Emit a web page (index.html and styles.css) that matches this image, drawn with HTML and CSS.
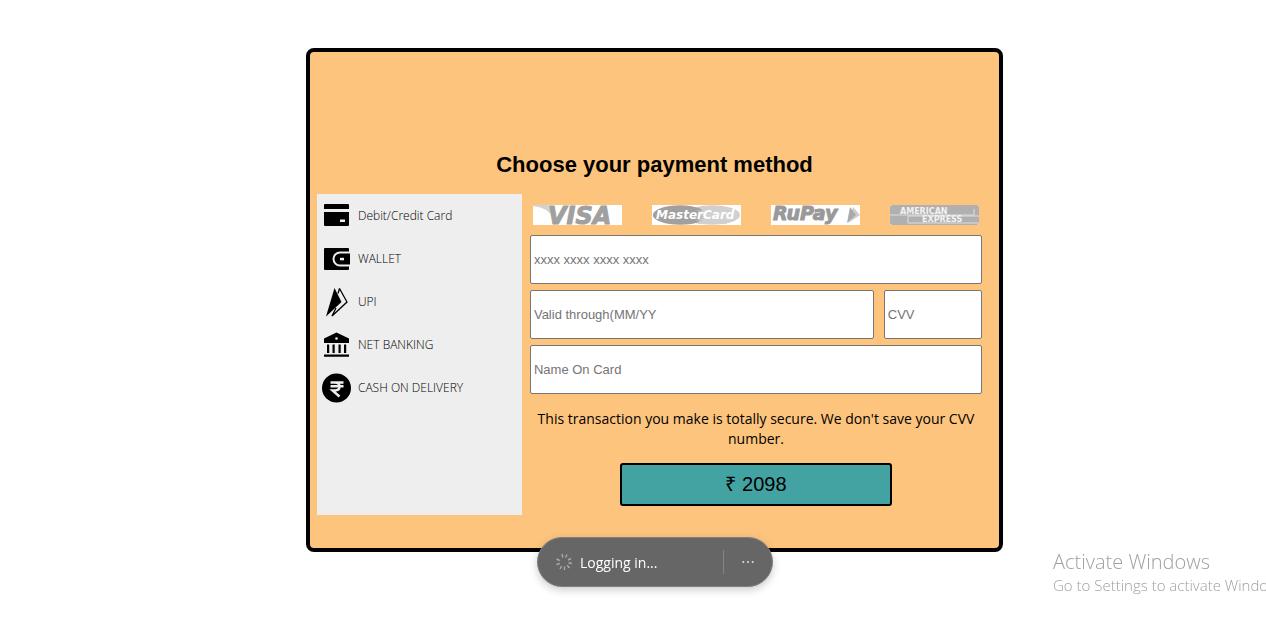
FILE: index.html
```html
<!DOCTYPE html>
<html lang="en">
<head>
<meta charset="utf-8">
<title>Payment</title>
<link rel="stylesheet" href="styles.css">
</head>
<body>
<main class="page">
  <section class="card">
    <h1 class="title">Choose your payment method</h1>
    <div class="columns">
      <nav class="methods" aria-label="Payment methods">
        <a class="method" href="#card">
          <svg class="icon" viewBox="0 0 30 30" aria-hidden="true"><path d="M3 3h23q1 0 1 1v4H2V4q0-1 1-1zM2 11h25v13q0 1-1 1H3q-1 0-1-1z"/><path fill="#eee" d="M18 18.500h5v2.500h-5z"/></svg>
          Debit/Credit Card</a>
        <a class="method" href="#wallet">
          <svg class="icon" viewBox="0 0 30 30" aria-hidden="true"><path d="M3 4h23q1 0 1 1v2.500H18a7.500 7.500 0 0 0 0 15h9V25q0 1-1 1H3q-1 0-1-1V5q0-1 1-1z"/><path d="M18 9.500h10v11H18a5.500 5.500 0 0 1 0-11z"/><path fill="#eee" d="M18 13.800h4v2.500h-4z"/></svg>
          WALLET</a>
        <a class="method" href="#upi">
          <svg class="icon" viewBox="0 0 30 30" aria-hidden="true"><path d="M12.500 1l7 14L4 29.500z"/><path d="M17.500 1.500L25 15 10 29l4-8M17.500 1.500l-1.500 5" fill="none" stroke="#000" stroke-width="1.300"/></svg>
          UPI</a>
        <a class="method" href="#netbanking">
          <svg class="icon" viewBox="0 0 30 30" aria-hidden="true"><path d="M14.500 2.500L27 8.500V13H2V8.500zM5 14.500h2.200V23H5zm5.500 0h2.200V23h-2.200zm6 0h2.200V23h-2.200zm5.500 0h2.200V23H22zM2 24.500h25v2.200H2z"/><circle cx="14.500" cy="8.500" r="1.300" fill="#eee"/></svg>
          NET BANKING</a>
        <a class="method" href="#cash">
          <svg class="icon" viewBox="0 0 30 30" aria-hidden="true"><circle cx="14.500" cy="15" r="14.500"/><path d="M8.500 9.500h13M8.500 13.300h13M9.500 9.500h3.500q4.500 0 4.500 4t-4.500 4h-2.500l7 6" fill="none" stroke="#eee" stroke-width="2.400"/></svg>
          CASH ON DELIVERY</a>
      </nav>
      <form class="form">
        <div class="brands">
          <svg class="brand" viewBox="0 0 89 20" role="img" aria-label="Visa">
            <rect width="89" height="20" fill="#fff"/>
            <path d="M0 0h14q3 0 3.500 2l3 11Q14 2 0 1z" fill="#d2d2d2"/>
            <text class="brand-visa" x="15" y="19">VISA</text>
          </svg>
          <svg class="brand" viewBox="0 0 89 20" role="img" aria-label="MasterCard">
            <rect width="89" height="20" fill="#fff"/>
            <ellipse cx="60" cy="10" rx="28" ry="9.800" fill="#d0d0d0"/>
            <path d="M48 3.500A27 9.800 0 1 0 48 16.500l-5-1h7l-7-2h9l-8-2h8l-8-2h8l-8-2h8l-8-2h7z" fill="#a0a0a0"/>
            <text class="brand-master" x="4" y="14">MasterCard</text>
          </svg>
          <svg class="brand" viewBox="0 0 89 20" role="img" aria-label="RuPay">
            <rect width="89" height="20" fill="#fff"/>
            <path d="M82 2l7 8-12 8z" fill="#ccc"/>
            <path d="M79 2l6 8-9 8z" fill="#aaa"/>
            <text class="brand-rupay" x="2" y="15">RuPay</text>
          </svg>
          <svg class="brand" viewBox="0 0 89 20" role="img" aria-label="American Express">
            <rect width="89" height="20" fill="#ddd"/>
            <rect width="89" height="20" rx="3" fill="#b0b0b0"/>
            <path d="M0 10h84V4M89 18H18v-7h71" fill="none" stroke="#dedede" stroke-width="1"/>
            <text class="brand-amex" x="10" y="9">AMERICAN</text>
            <text class="brand-amex" x="32" y="17">EXPRESS</text>
          </svg>
        </div>
        <div class="fields">
          <input class="field" type="text" placeholder="xxxx xxxx xxxx xxxx" aria-label="Card number">
          <div class="pair">
            <input class="field" type="text" placeholder="Valid through(MM/YY" aria-label="Valid through">
            <input class="field" type="text" placeholder="CVV" aria-label="CVV">
          </div>
          <input class="field" type="text" placeholder="Name On Card" aria-label="Name on card">
        </div>
        <p class="note">This transaction you make is totally secure. We don't save your CVV number.</p>
        <button class="pay" type="button">₹ 2098</button>
      </form>
    </div>
  </section>
</main>
<div class="toast" role="status">
  <svg class="spinner" viewBox="0 0 18 18" aria-hidden="true"><g stroke="#aaa" stroke-width="1.400"><path d="M7 1l.8 3.500M12 1.500l-1.500 3M16 5.500l-3 1.500M17 10.500l-3.500-.8M14.500 15l-2.300-2.700M9.500 17v-3.500M5 16l1.500-3M1.500 11.500l3.300-1M1.500 6l3.200 1.500"/></g></svg>
  <span class="toast-text">Logging in...</span>
  <button class="more" type="button" aria-label="More">
    <svg class="dots" viewBox="0 0 12 4"><circle cx="1.300" cy="2" r="1"/><circle cx="6" cy="2" r="1"/><circle cx="10.700" cy="2" r="1"/></svg>
  </button>
</div>
<aside class="watermark">
  <div class="watermark-title">Activate Windows</div>
  <div class="watermark-text">Go to Settings to activate Windows.</div>
</aside>
</body>
</html>
```
FILE: styles.css
```css
* { box-sizing: border-box; }
body { margin: 0; background: #fff; color: #000; font-family: "Open Sans", "Noto Sans", sans-serif; }
.page { padding: 48px 0 48px 43px; }
.card {
  width: 57%;
  min-width: 600px;
  margin: 0 auto;
  padding: 100px 17px 33px 7px;
  border: 4px solid #000;
  border-radius: 8px;
  background: #fdc47d;
}
.title {
  margin: 0 0 16px 10px;
  font: bold 22px/26px "Liberation Sans", Arial, sans-serif;
  text-align: center;
}
.columns { display: grid; grid-template-columns: 205px 1fr; gap: 8px; }
.methods { display: flex; flex-direction: column; background: #eee; }
.method {
  display: flex;
  align-items: center;
  gap: 6px;
  height: 43px;
  padding-left: 5px;
  color: #000;
  font-size: 12px;
  font-weight: 300;
  text-decoration: none;
}
.icon { width: 30px; height: 30px; }
.form { display: flex; flex-direction: column; padding: 11px 0 9px; }
.brands { display: flex; justify-content: space-between; margin: 0 3px 10px; }
.brand { width: 89px; height: 20px; overflow: visible; }
.brand text { font-family: "DejaVu Sans", sans-serif; font-weight: bold; font-style: oblique; }
.brand .brand-visa { font-size: 24px; fill: #a0a0a0; stroke: #a0a0a0; stroke-width: 1px; }
.brand .brand-master { font-size: 12px; fill: #fff; }
.brand .brand-rupay { font-size: 19px; fill: #999; stroke: #999; stroke-width: 1px; }
.brand .brand-amex { font-size: 8px; font-style: normal; fill: #f2f2f2; stroke: #f2f2f2; stroke-width: 0; }
.fields { display: grid; gap: 6px; }
.pair { display: grid; grid-template-columns: 7fr 2fr; gap: 10px; }
.field {
  width: 100%;
  min-width: 0;
  height: 49px;
  padding: 0 3px;
  border: 1px solid #767676;
  border-radius: 2px;
  background: #fff;
  font: 13px "Liberation Sans", Arial, sans-serif;
}
.field::placeholder { color: #757575; }
.note { margin: 15px 0 14px; font-size: 14px; line-height: 20px; text-align: center; }
.pay {
  align-self: center;
  width: 60%;
  height: 43px;
  padding: 0 0 2px;
  border: 2px solid #000;
  border-radius: 3px;
  background: #43a2a2;
  color: #000;
  font: 20px "Liberation Sans", Arial, sans-serif;
}
.toast {
  position: fixed;
  left: calc(50% + 22px);
  bottom: 36px;
  transform: translateX(-50%);
  display: flex;
  align-items: center;
  width: 236px;
  height: 50px;
  padding-left: 17px;
  border: 1px solid #808080;
  border-radius: 25px;
  background: #666;
  box-shadow: 0 3px 8px rgba(0, 0, 0, 0.2);
  color: #fff;
}
.spinner { width: 18px; height: 18px; }
.toast-text { flex: 1; padding-left: 7px; font-size: 14px; }
.more {
  display: flex;
  align-items: center;
  justify-content: center;
  width: 49px;
  height: 24px;
  padding: 0;
  border: 0;
  border-left: 1px solid #858585;
  background: none;
}
.dots { width: 12px; height: 4px; fill: #ddd; }
.watermark {
  position: fixed;
  right: 0;
  bottom: 28px;
  width: 213px;
  overflow: hidden;
  color: #a0a0a0;
  font-weight: 300;
  white-space: nowrap;
}
.watermark-title { font-size: 20px; line-height: 26px; }
.watermark-text { font-size: 15px; line-height: 20px; }
```
